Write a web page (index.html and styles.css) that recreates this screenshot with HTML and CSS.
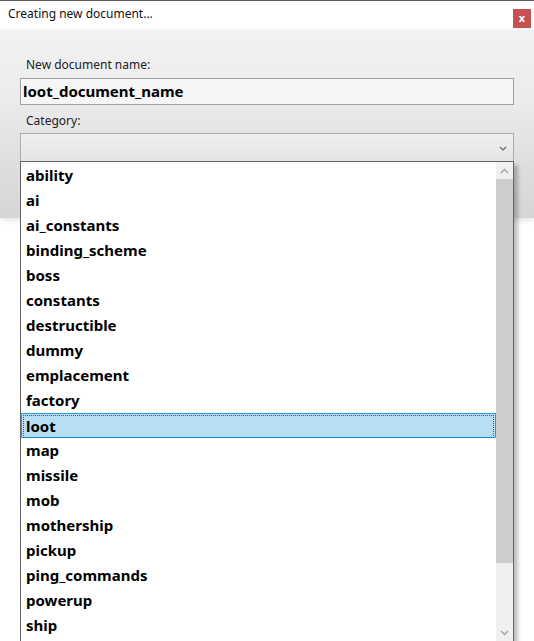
FILE: index.html
```html
<!DOCTYPE html>
<html>
<head>
<meta charset="utf-8">
<link rel="stylesheet" href="styles.css">
</head>
<body>
<div class="window">
  <div class="topline"></div>
  <div class="titlebar">
    <span class="title">Creating new document...</span>
    <span class="close">x</span>
  </div>
  <div class="dialog">
    <div class="label">New document name:</div>
    <div class="textbox">loot_document_name</div>
    <div class="label label-cat">Category:</div>
    <div class="combo">
      <svg class="chev" width="8" height="5" viewBox="0 0 8 5"><path d="M1 1 L4 4 L7 1" fill="none" stroke="#666" stroke-width="1.2"/></svg>
      <div class="popup">
        <ul class="list">
          <li>ability</li>
          <li>ai</li>
          <li>ai_constants</li>
          <li>binding_scheme</li>
          <li>boss</li>
          <li>constants</li>
          <li>destructible</li>
          <li>dummy</li>
          <li>emplacement</li>
          <li>factory</li>
          <li class="sel"><span>loot</span></li>
          <li>map</li>
          <li>missile</li>
          <li>mob</li>
          <li>mothership</li>
          <li>pickup</li>
          <li>ping_commands</li>
          <li>powerup</li>
          <li>ship</li>
        </ul>
        <div class="scrollbar">
          <div class="sbtn"><svg width="9" height="6" viewBox="0 0 9 6"><path d="M1 5 L4.5 1.5 L8 5" fill="none" stroke="#a0a0a0" stroke-width="1.3"/></svg></div>
          <div class="thumb"></div>
          <div class="track"></div>
          <div class="sbtn"><svg width="9" height="6" viewBox="0 0 9 6"><path d="M1 1 L4.5 4.5 L8 1" fill="none" stroke="#a0a0a0" stroke-width="1.3"/></svg></div>
        </div>
      </div>
    </div>
  </div>
</div>
</body>
</html>
```
FILE: styles.css
```css
html, body {
  margin: 0;
  padding: 0;
  background: #ffffff;
  overflow: hidden;
}
.window {
  width: 534px;
  height: 641px;
  font-family: "Noto Sans", "Open Sans", sans-serif;
  position: relative;
  overflow: hidden;
}
.topline {
  height: 1px;
  background: #5a5a5a;
}
.titlebar {
  height: 29px;
  background: #ffffff;
  display: flex;
  align-items: center;
  justify-content: space-between;
  padding: 0 3px 0 8px;
}
.title {
  font-size: 12px;
  color: #111;
  margin-top: -4px;
}
.close {
  width: 18px;
  height: 19px;
  background: #c75050;
  color: #fff;
  font-weight: bold;
  font-size: 11px;
  line-height: 18px;
  text-align: center;
  margin-top: 5px;
}
.dialog {
  height: 188px;
  background: linear-gradient(to bottom, #f2f2f2 0%, #ececec 35%, #dddddd 75%, #d6d6d6 100%);
  box-shadow: 0 2px 6px rgba(0,0,0,0.12);
  padding: 25px 20px 0 20px;
  box-sizing: border-box;
}
.label {
  font-size: 12px;
  color: #222;
  padding-left: 6px;
  height: 23px;
  line-height: 19px;
}
.label-cat {
  margin-top: 6px;
  height: 22px;
}
.textbox {
  height: 27px;
  box-sizing: border-box;
  border: 1px solid #a0a0a0;
  background: #f5f5f5;
  font-weight: bold;
  font-size: 15px;
  line-height: 24px;
  padding-left: 2px;
  color: #000;
}
.combo {
  height: 28px;
  box-sizing: border-box;
  border: 1px solid #acacac;
  border-bottom: none;
  background: linear-gradient(to bottom, #efefef, #e5e5e5);
  position: relative;
}
.chev {
  position: absolute;
  right: 6px;
  top: 12px;
}
.popup {
  position: absolute;
  left: -1px;
  top: 27px;
  width: 494px;
  height: 481px;
  box-sizing: border-box;
  border: 1px solid #646464;
  background: #fff;
  display: flex;
  box-shadow: 4px 4px 4px rgba(0,0,0,0.25);
}
.list {
  list-style: none;
  margin: 0;
  padding: 1px 0 0 0;
  flex: 1;
  overflow: hidden;
}
.list li {
  height: 25px;
  line-height: 24px;
  font-size: 15px;
  font-weight: bold;
  color: #000;
  padding-left: 5px;
  box-sizing: border-box;
}
.list li.sel {
  background: #b7def3;
  border: 1px solid #26a0da;
  padding: 1px;
  line-height: 20px;
}
.list li.sel span {
  display: block;
  height: 21px;
  border: 1px dotted #555;
  padding-left: 2px;
}
.scrollbar {
  width: 17px;
  display: flex;
  flex-direction: column;
  background: #f0f0f0;
}
.sbtn {
  height: 17px;
  display: flex;
  align-items: center;
  justify-content: center;
  flex: none;
}
.thumb {
  height: 384px;
  background: #cdcdcd;
  flex: none;
}
.track {
  flex: 1;
}
```
